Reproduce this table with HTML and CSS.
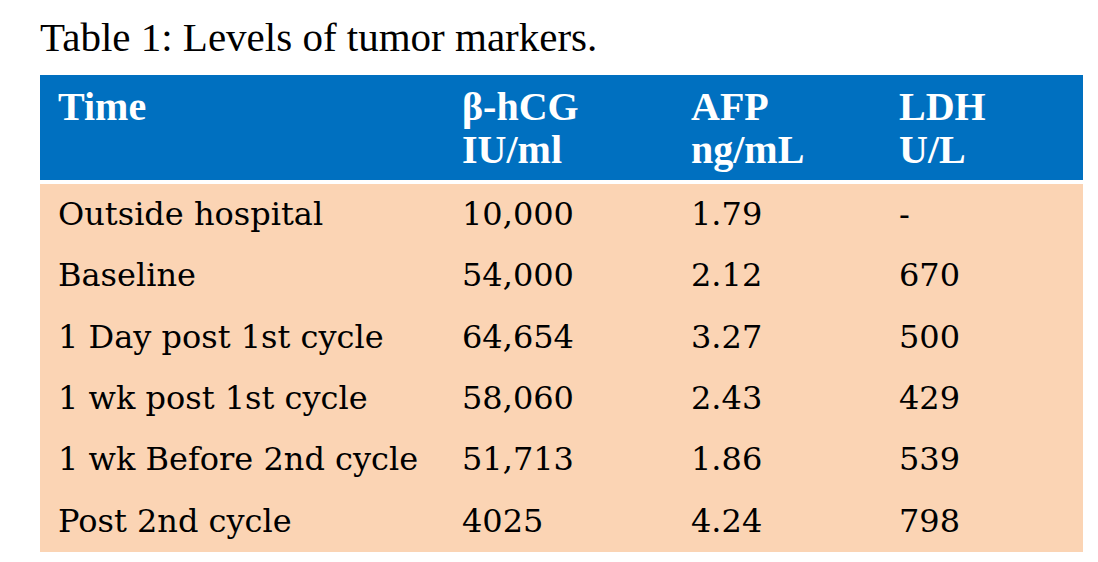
FILE: index.html
```html
<!DOCTYPE html>
<html>
<head>
<meta charset="utf-8">
<link rel="stylesheet" href="styles.css">
</head>
<body>
<div class="wrap">
  <div class="caption">Table 1: Levels of tumor markers.</div>
  <table class="markers">
    <colgroup>
      <col class="c1"><col class="c2"><col class="c3"><col class="c4">
    </colgroup>
    <thead>
      <tr>
        <th>Time</th>
        <th>β-hCG<br>IU/ml</th>
        <th>AFP<br>ng/mL</th>
        <th>LDH<br>U/L</th>
      </tr>
    </thead>
    <tbody>
      <tr><td>Outside hospital</td><td>10,000</td><td>1.79</td><td>-</td></tr>
      <tr><td>Baseline</td><td>54,000</td><td>2.12</td><td>670</td></tr>
      <tr><td>1 Day post 1st cycle</td><td>64,654</td><td>3.27</td><td>500</td></tr>
      <tr><td>1 wk post 1st cycle</td><td>58,060</td><td>2.43</td><td>429</td></tr>
      <tr><td>1 wk Before 2nd cycle</td><td>51,713</td><td>1.86</td><td>539</td></tr>
      <tr><td>Post 2nd cycle</td><td>4025</td><td>4.24</td><td>798</td></tr>
    </tbody>
  </table>
</div>
</body>
</html>
```
FILE: styles.css
```css
html, body {
  margin: 0;
  padding: 0;
  background: #ffffff;
}
.wrap {
  margin-left: 40px;
  width: 1043px;
}
.caption {
  font-family: "Liberation Serif", "Times New Roman", serif;
  font-size: 41px;
  line-height: 46px;
  color: #000;
  padding-top: 14px;
  height: 75px;
  box-sizing: border-box;
}
.markers {
  width: 1043px;
  border-collapse: collapse;
  table-layout: fixed;
}
.c1 { width: 404px; }
.c2 { width: 229px; }
.c3 { width: 208px; }
.c4 { width: 202px; }
.markers th {
  background: #0070c0;
  color: #fff;
  font-family: "Liberation Serif", "Times New Roman", serif;
  font-weight: bold;
  font-size: 40px;
  line-height: 43px;
  text-align: left;
  vertical-align: top;
  padding: 10px 0 9px 18px;
  border-bottom: 4px solid #fff;
}
.markers td {
  background: #fbd4b4;
  color: #000;
  font-family: "DejaVu Serif", Georgia, serif;
  font-size: 32px;
  line-height: 36px;
  padding: 12px 0 13.33px 18px;
  white-space: nowrap;
}
```
